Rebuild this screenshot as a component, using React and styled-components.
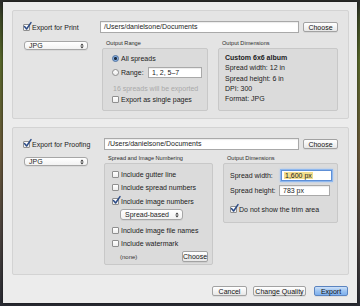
import React from 'react';
import styled, { createGlobalStyle } from 'styled-components';

const Global = createGlobalStyle`
  html, body { margin: 0; padding: 0; }
  body {
    width: 360px; height: 306px; overflow: hidden;
    background: linear-gradient(180deg, #2c2d2b 0px, #2c2d2b 2px, #3d4826 18px, #5a6a2c 60px, #6b5a3a 150px, #4e4540 230px, #2a2c34 306px);
    font-family: "Liberation Sans", Arial, sans-serif;
    color: #1c1c1c;
  }
  #root { width: 360px; height: 306px; }
`;

const Dialog = styled.div`
  box-sizing: border-box;
  margin: 2px 3px 0;
  width: 354px;
  height: 301px;
  background: #ececec;
  padding: 8px 8px 0 9px;
  display: flex;
  flex-direction: column;
  box-shadow: 0 0 3px rgba(0, 0, 0, 0.6);
`;

const Panel = styled.section`
  box-sizing: border-box;
  height: ${p => p.$h}px;
  margin-top: ${p => p.$mt || 0}px;
  border: 1px solid #d3d3d3;
  background: #e4e4e4;
  border-radius: 2px;
  padding: 10px 10px 0 11px;
  display: grid;
  grid-template-columns: ${p => p.$left}px 1fr;
  grid-template-rows: 12px auto;
  align-content: start;
`;

const HeaderCheck = styled.label`
  display: flex;
  align-items: center;
  gap: 2px;
  margin-left: -1px;
  font-size: 7px;
  white-space: nowrap;
`;

const PathRow = styled.div`
  display: flex;
  align-items: center;
  gap: 4px;
`;

const TextField = styled.div`
  box-sizing: border-box;
  flex: ${p => (p.$w ? 'none' : '1')};
  width: ${p => (p.$w ? `${p.$w}px` : 'auto')};
  height: ${p => p.$h || 12}px;
  background: #fff;
  border: 1px solid #a9a9a9;
  border-top-color: #8c8c8c;
  font-size: 7px;
  line-height: ${p => (p.$h || 12) - 2}px;
  padding-left: ${p => p.$pl ?? 2}px;
  white-space: nowrap;
  overflow: hidden;
  color: ${p => p.$color || '#1c1c1c'};
  box-shadow: ${p => (p.$focus ? '0 0 0 1px #8fb8ee, 0 0 2px 1px #a9c8f2' : 'inset 0 1px 1px rgba(0,0,0,0.08)')};
  border-color: ${p => (p.$focus ? '#5e8fd6' : '#a9a9a9')};
`;

const Highlight = styled.span`
  background: #f3df8e;
  padding: 0 1px;
`;

const Button = styled.button`
  box-sizing: border-box;
  flex: none;
  width: ${p => p.$w}px;
  height: ${p => p.$h || 10}px;
  padding: 0;
  margin: 0;
  font: 7px "Liberation Sans", Arial, sans-serif;
  color: #111;
  border: 1px solid ${p => (p.$primary ? '#5b84c0' : '#a2a2a2')};
  border-radius: 2px;
  background: ${p =>
    p.$primary
      ? 'linear-gradient(#cfe2f9, #9cc3f1 50%, #7eb0ee)'
      : 'linear-gradient(#ffffff, #f4f4f4 50%, #e7e7e7)'};
  display: flex;
  align-items: center;
  justify-content: center;
  box-shadow: 0 1px 0 rgba(0, 0, 0, 0.06);
`;

const SelectBox = styled.div`
  box-sizing: border-box;
  width: ${p => p.$w}px;
  height: ${p => p.$h}px;
  margin-top: ${p => p.$mt || 0}px;
  display: flex;
  align-items: center;
  justify-content: space-between;
  padding: 0 3px 0 4px;
  background: linear-gradient(#ffffff, #f2f2f2);
  border: 1px solid #a6a6a6;
  border-radius: 3px;
  font-size: 7px;
  box-shadow: 0 1px 0 rgba(0, 0, 0, 0.05);
`;

const Groups = styled.div`
  display: flex;
  gap: 10px;
  margin-top: ${p => p.$mt}px;
  align-items: flex-start;
`;

const Group = styled.div`
  display: flex;
  flex-direction: column;
  width: ${p => p.$w}px;
  margin-left: ${p => p.$ml || 0}px;
`;

const GroupLabel = styled.div`
  font-size: 5.6px;
  line-height: 7px;
  height: 7px;
  padding-left: 4px;
  color: #2a2a2a;
  white-space: nowrap;
`;

const GroupBox = styled.div`
  box-sizing: border-box;
  height: ${p => p.$h}px;
  margin-top: 1px;
  border: 1px solid #c8c8c8;
  background: #dbdbdb;
  border-radius: 2px;
  padding: ${p => p.$pad};
  display: flex;
  flex-direction: column;
`;

const Row = styled.div`
  display: flex;
  align-items: center;
  gap: 2px;
  height: ${p => p.$h || 10}px;
  margin-top: ${p => p.$mt || 0}px;
  margin-left: ${p => p.$ml || 0}px;
  justify-content: ${p => p.$justify || 'flex-start'};
  font-size: 7px;
  white-space: nowrap;
  color: ${p => p.$color || '#1c1c1c'};
`;

const FieldLabel = styled.span`
  display: inline-block;
  width: ${p => p.$w}px;
  flex: none;
`;

const Line = styled.div`
  font-size: 7px;
  line-height: 10.25px;
  white-space: nowrap;
  font-weight: ${p => (p.$bold ? 700 : 400)};
`;

const SmallNote = styled.span`
  font-size: 6px;
  color: #333;
`;

const Footer = styled.div`
  display: flex;
  justify-content: flex-end;
  margin-top: 11px;
  margin-right: 1px;
`;

const FooterGap = styled.span`
  width: ${p => p.$w}px;
  flex: none;
`;

const CheckSquare = styled.span`
  position: relative;
  box-sizing: border-box;
  flex: none;
  width: 7px;
  height: 7px;
  background: linear-gradient(#ffffff, #eeeeee);
  border: 1px solid #8f8f8f;
  border-radius: 1px;
`;

const CheckMark = styled.svg`
  position: absolute;
  left: -1px;
  top: -3px;
  width: 9px;
  height: 9px;
  overflow: visible;
`;

const RadioCircle = styled.span`
  box-sizing: border-box;
  flex: none;
  width: 7px;
  height: 7px;
  border-radius: 50%;
  border: 1px solid ${p => (p.$on ? '#4a6f9e' : '#8f8f8f')};
  background: ${p =>
    p.$on
      ? 'radial-gradient(circle, #1b2b40 0 1.3px, #7fa9de 1.6px, #a9c7ee 100%)'
      : 'linear-gradient(#ffffff, #ececec)'};
`;

const Check = ({ on }) => (
  <CheckSquare>
    {on && (
      <CheckMark viewBox="0 0 9 9">
        <path d="M1.5 4.6 L3.6 7 L8 0.6" fill="none" stroke="#2a4a86" strokeWidth="1.5" strokeLinecap="round" strokeLinejoin="round" />
      </CheckMark>
    )}
  </CheckSquare>
);

const Arrows = () => (
  <svg width="4" height="6" viewBox="0 0 4 6">
    <path d="M0.3 2.4 L2 0.4 L3.7 2.4 Z M0.3 3.6 L2 5.6 L3.7 3.6 Z" fill="#333" />
  </svg>
);

const Select = ({ w, h, mt, children }) => (
  <SelectBox $w={w} $h={h} $mt={mt}>
    <span>{children}</span>
    <Arrows />
  </SelectBox>
);

export default function App() {
  return (
    <>
      <Global />
      <Dialog>
        <Panel $h={109} $left={76}>
          <HeaderCheck>
            <Check on />
            Export for Print
          </HeaderCheck>
          <PathRow>
            <TextField $pl={3}>/Users/danielsone/Documents</TextField>
            <Button $w={35}>Choose</Button>
          </PathRow>
          <div>
            <Select w={64} h={9} mt={8}>JPG</Select>
          </div>
          <Groups $mt={7}>
            <Group $w={106} $ml={2}>
              <GroupLabel>Output Range</GroupLabel>
              <GroupBox $h={63} $pad="4px 0 0 9px">
                <Row $h={10}>
                  <RadioCircle $on />
                  All spreads
                </Row>
                <Row $h={11} $mt={4}>
                  <RadioCircle />
                  <FieldLabel $w={25}>Range:</FieldLabel>
                  <TextField $w={54} $h={11} $pl={3}>1, 2, 5–7</TextField>
                </Row>
                <Row $h={10} $mt={5} $ml={1} $color="#a9a9a9">
                  16 spreads will be exported
                </Row>
                <Row $h={10} $mt={1}>
                  <Check />
                  Export as single pages
                </Row>
              </GroupBox>
            </Group>
            <Group $w={120}>
              <GroupLabel>Output Dimensions</GroupLabel>
              <GroupBox $h={63} $pad="4px 0 0 6px">
                <Line $bold>Custom 6x6 album</Line>
                <Line>Spread width: 12 in</Line>
                <Line>Spread height: 6 in</Line>
                <Line>DPI: 300</Line>
                <Line>Format: JPG</Line>
              </GroupBox>
            </Group>
          </Groups>
        </Panel>

        <Panel $h={148} $mt={8} $left={80}>
          <HeaderCheck>
            <Check on />
            Export for Proofing
          </HeaderCheck>
          <PathRow>
            <TextField $pl={3}>/Users/danielsone/Documents</TextField>
            <Button $w={35}>Choose</Button>
          </PathRow>
          <div>
            <Select w={64} h={9} mt={7}>JPG</Select>
          </div>
          <Groups $mt={5}>
            <Group $w={109}>
              <GroupLabel>Spread and Image Numbering</GroupLabel>
              <GroupBox $h={102} $pad="5px 4px 0 7px">
                <Row>
                  <Check />
                  Include gutter line
                </Row>
                <Row $mt={3}>
                  <Check />
                  Include spread numbers
                </Row>
                <Row $mt={4}>
                  <Check on />
                  Include image numbers
                </Row>
                <Row $h={11} $mt={3} $ml={8}>
                  <Select w={63} h={11}>Spread-based</Select>
                </Row>
                <Row $mt={5}>
                  <Check />
                  Include image file names
                </Row>
                <Row $mt={3}>
                  <Check />
                  Include watermark
                </Row>
                <Row $h={11} $mt={3} $ml={8} $justify="space-between">
                  <SmallNote>(none)</SmallNote>
                  <Button $w={26} $h={11}>Choose</Button>
                </Row>
              </GroupBox>
            </Group>
            <Group $w={115}>
              <GroupLabel>Output Dimensions</GroupLabel>
              <GroupBox $h={60} $pad="5px 0 0 6px">
                <Row $h={12} $gap={0}>
                  <FieldLabel $w={49}>Spread width:</FieldLabel>
                  <TextField $w={51} $h={11} $pl={2} $focus>
                    <Highlight>1,600 px</Highlight>
                  </TextField>
                </Row>
                <Row $h={11} $mt={4}>
                  <FieldLabel $w={47}>Spread height:</FieldLabel>
                  <TextField $w={51} $h={11} $pl={3}>783 px</TextField>
                </Row>
                <Row $mt={8}>
                  <Check on />
                  Do not show the trim area
                </Row>
              </GroupBox>
            </Group>
          </Groups>
        </Panel>

        <Footer>
          <Button $w={35}>Cancel</Button>
          <FooterGap $w={6} />
          <Button $w={53}>Change Quality</Button>
          <FooterGap $w={8} />
          <Button $w={34} $primary>Export</Button>
        </Footer>
      </Dialog>
    </>
  );
}
